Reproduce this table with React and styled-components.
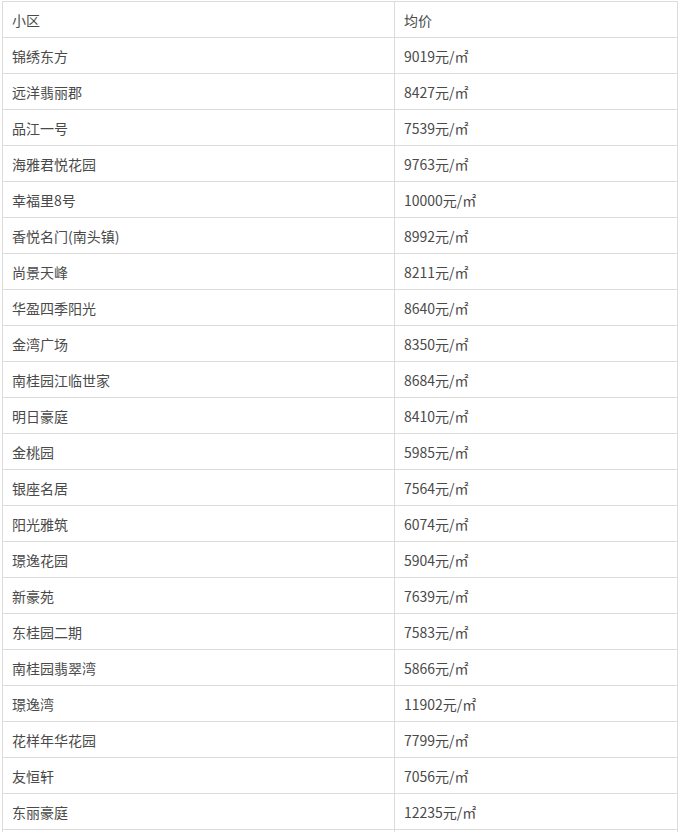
import React from "react";
import styled, { createGlobalStyle } from "styled-components";

const GlobalStyle = createGlobalStyle`
  body {
    margin: 0;
    padding: 1px 0 0 2px;
    background: #fff;
  }
`;

const Table = styled.table`
  border-collapse: collapse;
  width: 675px;
  table-layout: fixed;
  font-family: "Noto Sans CJK SC", "Liberation Sans", sans-serif;
  font-size: 14px;
  color: #4a4a4a;
`;

const Col = styled.col`
  width: ${(p) => p.$w};
`;

const Cell = styled.td`
  border: 1px solid #dcdcdc;
  height: 35px;
  padding: 0 0 0 9px;
  vertical-align: middle;
  line-height: 20px;
`;

const rows = [
  ["锦绣东方", "9019"],
  ["远洋翡丽郡", "8427"],
  ["品江一号", "7539"],
  ["海雅君悦花园", "9763"],
  ["幸福里8号", "10000"],
  ["香悦名门(南头镇)", "8992"],
  ["尚景天峰", "8211"],
  ["华盈四季阳光", "8640"],
  ["金湾广场", "8350"],
  ["南桂园江临世家", "8684"],
  ["明日豪庭", "8410"],
  ["金桃园", "5985"],
  ["银座名居", "7564"],
  ["阳光雅筑", "6074"],
  ["璟逸花园", "5904"],
  ["新豪苑", "7639"],
  ["东桂园二期", "7583"],
  ["南桂园翡翠湾", "5866"],
  ["璟逸湾", "11902"],
  ["花样年华花园", "7799"],
  ["友恒轩", "7056"],
  ["东丽豪庭", "12235"],
  ["", ""],
];

export default function App() {
  return (
    <>
      <GlobalStyle />
      <Table>
        <colgroup>
          <Col $w="392px" />
          <Col $w="283px" />
        </colgroup>
        <tbody>
          <tr>
            <Cell>小区</Cell>
            <Cell>均价</Cell>
          </tr>
          {rows.map(([name, price], i) => (
            <tr key={i}>
              <Cell>{name}</Cell>
              <Cell>{price ? `${price}元/㎡` : ""}</Cell>
            </tr>
          ))}
        </tbody>
      </Table>
    </>
  );
}
